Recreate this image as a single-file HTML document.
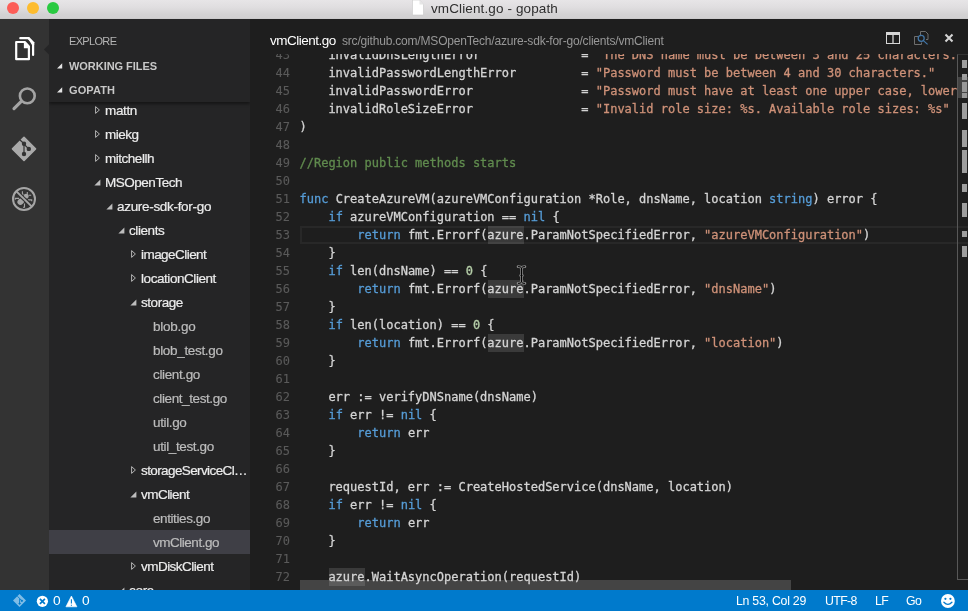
<!DOCTYPE html>
<html><head><meta charset="utf-8"><title>vmClient.go - gopath</title>
<style>
*{box-sizing:border-box;margin:0;padding:0}
html,body{width:968px;height:611px;overflow:hidden;background:#1e1e1e}
body{position:relative;font-family:"Liberation Sans",sans-serif;color:#ccc}
#titlebar{position:absolute;left:0;top:0;width:968px;height:19px;background:linear-gradient(#e7e5e7,#e0dee0 40%,#d3d2d3 80%,#d1d0d1);border-bottom:1px solid #cbcacb}
.dot{position:absolute;top:2px;width:12px;height:12px;border-radius:50%}
#title{will-change:transform;position:absolute;left:430.5px;top:0;height:18px;line-height:17px;font-size:13.5px;color:#2e2e2e;white-space:nowrap;letter-spacing:0.121px}
#ficon{position:absolute;left:412px;top:0}
#activity{position:absolute;left:0;top:19px;width:49px;height:571px;background:#333333}
#activity svg{position:absolute;left:0;top:0}
#sidebar{position:absolute;left:49px;top:19px;width:201px;height:571px;background:#252526;overflow:hidden}
#editor{position:absolute;left:250px;top:19px;width:718px;height:571px;background:#1e1e1e;overflow:hidden}
#status{position:absolute;left:0;top:590px;width:968px;height:21px;background:#007acc;color:#fff;font-size:12.3px}
#status span{will-change:transform;position:absolute;top:0;height:21px;line-height:22px;white-space:nowrap}
#status svg{position:absolute;left:0;top:0}
#shead{position:absolute;left:0;top:0;width:201px;height:83px;background:#252526;box-shadow:0 2px 3px rgba(0,0,0,.45);z-index:2}
.hdr{will-change:transform;position:absolute;left:20px;white-space:nowrap;font-size:11px;line-height:14px}
.row{position:absolute;left:0;width:201px;height:24px;line-height:24px;font-size:13.5px;white-space:nowrap}
.row span{position:absolute;top:1px;will-change:transform;-webkit-text-stroke:0.2px}
.row.d span{color:#ececec}
.row.f span{color:#bcbcbc}
.row.sel{background:#3f3f46}
.row svg{position:absolute;top:0}
#ehead{position:absolute;left:0;top:0;width:718px;height:35px;background:#1e1e1e;z-index:3}
#ehead span{position:absolute;white-space:nowrap;will-change:transform}
#code{position:absolute;left:0;top:0;width:707px;height:571px;overflow:hidden}
.ln{will-change:transform;position:absolute;left:0;width:1400px;height:18px;line-height:18px;font-family:"DejaVu Sans Mono","Liberation Mono",monospace;font-size:12px;white-space:pre;color:#d4d4d4;-webkit-text-stroke:0.3px}
.ln i{position:absolute;left:0;top:0;width:40px;text-align:right;color:#5a5a5a;font-style:normal;-webkit-text-stroke:0.1px}
.ln b{position:absolute;left:49.5px;top:0;font-weight:normal}
.k{color:#569cd6}.s{color:#ce9178}.m{color:#608b4e}.d{color:#b5cea8}
.h{position:absolute;width:36.2px;height:18px;background:rgba(255,255,255,.125)}
#cur{position:absolute;left:50px;width:657px;height:18px;border:2px solid #282828;border-right:0}
#ruler{position:absolute;left:707px;top:35px;width:11px;height:526px;border-left:1px solid #585858;border-bottom:1px solid #585858;border-top:1px solid #333;background:#1e1e1e;z-index:4}
#ruler div{position:absolute;left:4px;width:5px;margin-top:-1px;background:#9e9e9e}
#ruler s{position:absolute;left:0;width:10px;height:2px;background:#282828;z-index:-1}
#ruler p{position:absolute;left:0;top:22px;width:10px;height:21px;background:rgba(140,140,140,.35)}
#hscroll{position:absolute;left:50px;top:561px;width:491px;height:10px;background:#444}
</style></head><body>
<div id="titlebar"><div class="dot" style="left:7px;background:#fc5d57"></div><div class="dot" style="left:27px;background:#fdbc2f"></div><div class="dot" style="left:47px;background:#2aca41"></div><svg id="ficon" width="13" height="17" viewBox="0 0 13 17"><path d="M0.5 0 H7.5 L11.5 4.5 V15 H0.5 Z" fill="#fff" stroke="#c8c8c8" stroke-width="0.6"/><path d="M7.5 0 V4.5 H11.5 Z" fill="#e6e6e6"/></svg><div id="title">vmClient.go - gopath</div></div>
<div id="activity"><svg width="49" height="571" viewBox="0 19 49 571"><path d="M49 44.5 L44 49.5 L49 54.5 Z" fill="#252526"/><g fill="none" stroke="#fff" stroke-width="2.2" stroke-linejoin="round" stroke-linecap="round"><path d="M20.3 38.2 H28.4 L33.1 43 V55"/><path d="M16.2 42 H24.8 L28.9 46.4 V59.2 H16.2 Z"/></g><path d="M23.9 41.6 L29.8 48.3 H23.9 Z" fill="#fff"/><path d="M27.2 37.1 H29.2 L34.2 42.2 V45 H32 Z" fill="#fff"/><g fill="none" stroke="#a4a4a4" stroke-linecap="round"><circle cx="27.3" cy="95.9" r="7.4" stroke-width="2.6"/><path d="M21.3 101.4 L14 108.6" stroke-width="3.2"/></g><g><path d="M24 137.4 L35.5 148.9 L24 160.4 L12.5 148.9 Z" fill="#aaa" stroke="#aaa" stroke-width="1.6" stroke-linejoin="round"/><g stroke="#333" stroke-width="1.2" fill="#333"><path d="M19.8 139.8 L24 143.8 V154" fill="none"/><path d="M24 144.2 L28.5 148.6" fill="none"/><circle cx="24" cy="143.7" r="1.6"/><circle cx="28.8" cy="148.9" r="1.6"/><circle cx="24" cy="154" r="1.6"/></g></g><g fill="#a6a6a6"><ellipse cx="20.7" cy="201.6" rx="3.5" ry="3" transform="rotate(-45 20.7 201.6)"/><circle cx="26.1" cy="196.3" r="2.5"/></g><g fill="none" stroke="#a6a6a6" stroke-width="1.1"><path d="M15.2 199.8 V198.4 H19 M22.4 191.2 V194.2 H23.6 M27.3 192 V194.8 M28.6 195.3 H31.2 M28 199.9 H31.7 V201.2 M24.5 203.6 V207.3 H23"/></g><path d="M16.2 191.5 L31.6 206.3" stroke="#333" stroke-width="4" fill="none"/><g fill="none" stroke="#a6a6a6"><circle cx="24" cy="199" r="11" stroke-width="2"/><path d="M16.4 191.4 L31.6 206.4" stroke-width="2"/></g></svg></div>
<div id="sidebar">
<div id="shead"><div class="hdr" style="top:15px;color:#b4b4b4;letter-spacing:-0.667px">EXPLORE</div><div class="hdr" style="top:40px;color:#c8c8c8;font-weight:bold;letter-spacing:-0.047px">WORKING FILES</div><div class="hdr" style="top:64px;color:#c8c8c8;font-weight:bold;letter-spacing:0.127px">GOPATH</div><svg width="201" height="83" style="position:absolute;left:0;top:0"><path d="M13.2 44.2 V49.4 H8 Z M13.2 68.2 V73.4 H8 Z" fill="#e4e4e4"/></svg></div>
<div class="row d" style="top:79px"><svg width="8" height="24" style="left:45px"><path d="M1.6 8.6 L5.4 12 L1.6 15.4 Z" fill="none" stroke="#b4b4b4" stroke-width="1"/></svg><span style="left:56px;letter-spacing:-0.353px">mattn</span></div>
<div class="row d" style="top:103px"><svg width="8" height="24" style="left:45px"><path d="M1.6 8.6 L5.4 12 L1.6 15.4 Z" fill="none" stroke="#b4b4b4" stroke-width="1"/></svg><span style="left:56px;letter-spacing:-0.483px">miekg</span></div>
<div class="row d" style="top:127px"><svg width="8" height="24" style="left:45px"><path d="M1.6 8.6 L5.4 12 L1.6 15.4 Z" fill="none" stroke="#b4b4b4" stroke-width="1"/></svg><span style="left:56px;letter-spacing:-0.476px">mitchellh</span></div>
<div class="row d" style="top:151px"><svg width="8" height="24" style="left:45px"><path d="M6.4 9.4 V15.4 H0.4 Z" fill="#bdbdbd"/></svg><span style="left:56px;letter-spacing:-0.480px">MSOpenTech</span></div>
<div class="row d" style="top:175px"><svg width="8" height="24" style="left:57px"><path d="M6.4 9.4 V15.4 H0.4 Z" fill="#bdbdbd"/></svg><span style="left:68px;letter-spacing:-0.309px">azure-sdk-for-go</span></div>
<div class="row d" style="top:199px"><svg width="8" height="24" style="left:69px"><path d="M6.4 9.4 V15.4 H0.4 Z" fill="#bdbdbd"/></svg><span style="left:80px;letter-spacing:-0.424px">clients</span></div>
<div class="row d" style="top:223px"><svg width="8" height="24" style="left:81px"><path d="M1.6 8.6 L5.4 12 L1.6 15.4 Z" fill="none" stroke="#b4b4b4" stroke-width="1"/></svg><span style="left:92px;letter-spacing:-0.545px">imageClient</span></div>
<div class="row d" style="top:247px"><svg width="8" height="24" style="left:81px"><path d="M1.6 8.6 L5.4 12 L1.6 15.4 Z" fill="none" stroke="#b4b4b4" stroke-width="1"/></svg><span style="left:92px;letter-spacing:-0.439px">locationClient</span></div>
<div class="row d" style="top:271px"><svg width="8" height="24" style="left:81px"><path d="M6.4 9.4 V15.4 H0.4 Z" fill="#bdbdbd"/></svg><span style="left:92px;letter-spacing:-0.447px">storage</span></div>
<div class="row f" style="top:295px"><span style="left:104px;letter-spacing:-0.257px">blob.go</span></div>
<div class="row f" style="top:319px"><span style="left:104px;letter-spacing:-0.330px">blob_test.go</span></div>
<div class="row f" style="top:343px"><span style="left:104px;letter-spacing:-0.366px">client.go</span></div>
<div class="row f" style="top:367px"><span style="left:104px;letter-spacing:-0.404px">client_test.go</span></div>
<div class="row f" style="top:391px"><span style="left:104px;letter-spacing:-0.376px">util.go</span></div>
<div class="row f" style="top:415px"><span style="left:104px;letter-spacing:-0.375px">util_test.go</span></div>
<div class="row d" style="top:439px"><svg width="8" height="24" style="left:81px"><path d="M1.6 8.6 L5.4 12 L1.6 15.4 Z" fill="none" stroke="#b4b4b4" stroke-width="1"/></svg><span style="left:92px;letter-spacing:-0.606px">storageServiceCl…</span></div>
<div class="row d" style="top:463px"><svg width="8" height="24" style="left:81px"><path d="M6.4 9.4 V15.4 H0.4 Z" fill="#bdbdbd"/></svg><span style="left:92px;letter-spacing:-0.539px">vmClient</span></div>
<div class="row f" style="top:487px"><span style="left:104px;letter-spacing:-0.413px">entities.go</span></div>
<div class="row f sel" style="top:511px"><span style="left:104px;letter-spacing:-0.480px">vmClient.go</span></div>
<div class="row d" style="top:535px"><svg width="8" height="24" style="left:81px"><path d="M1.6 8.6 L5.4 12 L1.6 15.4 Z" fill="none" stroke="#b4b4b4" stroke-width="1"/></svg><span style="left:92px;letter-spacing:-0.530px">vmDiskClient</span></div>
<div class="row d" style="top:559px"><svg width="8" height="24" style="left:69px"><path d="M6.4 9.4 V15.4 H0.4 Z" fill="#bdbdbd"/></svg><span style="left:80px;letter-spacing:-0.316px">core</span></div>
</div>
<div id="editor">
<div id="ehead"><span style="left:20px;top:14px;font-size:13.5px;line-height:16px;color:#fff;letter-spacing:-0.498px">vmClient.go</span><span style="left:92px;top:14px;font-size:12px;line-height:16px;color:#989898;letter-spacing:-0.190px">src/github.com/MSOpenTech/azure-sdk-for-go/clients/vmClient</span><svg width="718" height="35" style="position:absolute;left:0;top:0"><g fill="none" stroke="#d6d6d6"><rect x="636.5" y="13.5" width="13" height="11" stroke-width="1"/><path d="M636 14.5 H650" stroke-width="3"/><path d="M643 14 V25" stroke-width="1.3"/></g><g fill="none" stroke="#6e6e6e" stroke-width="1"><path d="M668 17.5 H664.5 V25.5 H671.5 V23.5"/><path d="M670.5 16 V12.5 H675.5 L678 15 V20.5 H676"/></g><g fill="none" stroke="#4377a8" stroke-width="1.25"><circle cx="671.2" cy="19.3" r="3"/><path d="M673.4 21.6 L677.6 25.4"/></g><path d="M695.5 15.6 L702.5 22.6 M702.5 15.6 L695.5 22.6" stroke="#d4d4d4" stroke-width="2.1" fill="none"/></svg></div>
<div id="code">
<div id="cur" style="top:207px"></div>
<div id="hscroll"></div>
<div class="h" style="left:237.8px;top:207px"></div>
<div class="h" style="left:237.8px;top:261px"></div>
<div class="h" style="left:237.8px;top:315px"></div>
<div class="h" style="left:78.9px;top:549px"></div>
<div class="ln" style="top:27px"><i>43</i><b>    invalidDnsLengthError              = <span class="s">"The DNS name must be between 3 and 25 characters."</span></b></div>
<div class="ln" style="top:45px"><i>44</i><b>    invalidPasswordLengthError         = <span class="s">"Password must be between 4 and 30 characters."</span></b></div>
<div class="ln" style="top:63px"><i>45</i><b>    invalidPasswordError               = <span class="s">"Password must have at least one upper case, lower case and numeric character."</span></b></div>
<div class="ln" style="top:81px"><i>46</i><b>    invalidRoleSizeError               = <span class="s">"Invalid role size: %s. Available role sizes: %s"</span></b></div>
<div class="ln" style="top:99px"><i>47</i><b>)</b></div>
<div class="ln" style="top:117px"><i>48</i><b></b></div>
<div class="ln" style="top:135px"><i>49</i><b><span class="m">//Region public methods starts</span></b></div>
<div class="ln" style="top:153px"><i>50</i><b></b></div>
<div class="ln" style="top:171px"><i>51</i><b><span class="k">func</span> CreateAzureVM(azureVMConfiguration *Role, dnsName, location <span class="k">string</span>) error {</b></div>
<div class="ln" style="top:189px"><i>52</i><b>    <span class="k">if</span> azureVMConfiguration == <span class="k">nil</span> {</b></div>
<div class="ln" style="top:207px"><i>53</i><b>        <span class="k">return</span> fmt.Errorf(azure.ParamNotSpecifiedError, <span class="s">"azureVMConfiguration"</span>)</b></div>
<div class="ln" style="top:225px"><i>54</i><b>    }</b></div>
<div class="ln" style="top:243px"><i>55</i><b>    <span class="k">if</span> len(dnsName) == <span class="d">0</span> {</b></div>
<div class="ln" style="top:261px"><i>56</i><b>        <span class="k">return</span> fmt.Errorf(azure.ParamNotSpecifiedError, <span class="s">"dnsName"</span>)</b></div>
<div class="ln" style="top:279px"><i>57</i><b>    }</b></div>
<div class="ln" style="top:297px"><i>58</i><b>    <span class="k">if</span> len(location) == <span class="d">0</span> {</b></div>
<div class="ln" style="top:315px"><i>59</i><b>        <span class="k">return</span> fmt.Errorf(azure.ParamNotSpecifiedError, <span class="s">"location"</span>)</b></div>
<div class="ln" style="top:333px"><i>60</i><b>    }</b></div>
<div class="ln" style="top:351px"><i>61</i><b></b></div>
<div class="ln" style="top:369px"><i>62</i><b>    err := verifyDNSname(dnsName)</b></div>
<div class="ln" style="top:387px"><i>63</i><b>    <span class="k">if</span> err != <span class="k">nil</span> {</b></div>
<div class="ln" style="top:405px"><i>64</i><b>        <span class="k">return</span> err</b></div>
<div class="ln" style="top:423px"><i>65</i><b>    }</b></div>
<div class="ln" style="top:441px"><i>66</i><b></b></div>
<div class="ln" style="top:459px"><i>67</i><b>    requestId, err := CreateHostedService(dnsName, location)</b></div>
<div class="ln" style="top:477px"><i>68</i><b>    <span class="k">if</span> err != <span class="k">nil</span> {</b></div>
<div class="ln" style="top:495px"><i>69</i><b>        <span class="k">return</span> err</b></div>
<div class="ln" style="top:513px"><i>70</i><b>    }</b></div>
<div class="ln" style="top:531px"><i>71</i><b></b></div>
<div class="ln" style="top:549px"><i>72</i><b>    azure.WaitAsyncOperation(requestId)</b></div>
</div>
<div id="ruler"><div style="top:6px;height:8px"></div><div style="top:20px;height:6px"></div><div style="top:28px;height:10px"></div><div style="top:39px;height:5px"></div><div style="top:49px;height:16px"></div><div style="top:76px;height:17px"></div><div style="top:96px;height:23px"></div><div style="top:130px;height:8px"></div><div style="top:149px;height:14px"></div><div style="top:177px;height:6px"></div><div style="top:192px;height:11px"></div><p></p><s style="top:171px"></s><s style="top:187px"></s></div>
<svg width="13" height="22" viewBox="0 0 13 22" style="position:absolute;left:265px;top:245px;z-index:5"><path d="M3 2.6 Q5.6 2.4 6.5 4 Q7.4 2.4 10 2.6 M6.5 4 V18 M3 19.4 Q5.6 19.6 6.5 18 Q7.4 19.6 10 19.4 M5.5 11.5 H7.5" fill="none" stroke="#858585" stroke-width="2.6" stroke-linecap="round"/><path d="M3 2.6 Q5.6 2.4 6.5 4 Q7.4 2.4 10 2.6 M6.5 4 V18 M3 19.4 Q5.6 19.6 6.5 18 Q7.4 19.6 10 19.4 M5.5 11.5 H7.5" fill="none" stroke="#000" stroke-width="1" stroke-linecap="butt"/></svg>
</div>
<div id="status"><svg width="968" height="21" viewBox="0 590 968 21"><path d="M19.5 594 L26 600.5 L19.5 607 L13 600.5 Z" fill="#80bde6"/><g stroke="#007acc" stroke-width="0.9" fill="#007acc"><path d="M17.4 596.2 L19.6 598.4 V604 M19.6 598.6 L22 600.8" fill="none"/><circle cx="19.6" cy="603.6" r="0.7"/><circle cx="21.9" cy="600.8" r="0.7"/></g><circle cx="42.4" cy="601.3" r="5.6" fill="#fff"/><path d="M39.9 598.8 L44.9 603.8 M44.9 598.8 L39.9 603.8" stroke="#007acc" stroke-width="1.7" fill="none"/><path d="M71.4 596 L76.9 606.8 H65.9 Z" fill="#fff" stroke="#fff" stroke-width="0.6" stroke-linejoin="round"/><path d="M71.4 599.2 V603.6 M71.4 604.7 V605.8" stroke="#007acc" stroke-width="1.1" fill="none"/><circle cx="947.9" cy="601" r="6.9" fill="#fff"/><circle cx="945.4" cy="598.8" r="1.1" fill="#007acc"/><circle cx="950.4" cy="598.8" r="1.1" fill="#007acc"/><path d="M943.9 602.2 Q947.9 606.6 951.9 602.2" stroke="#007acc" stroke-width="1.3" fill="none" stroke-linecap="round"/></svg>
<span style="left:53.2px;transform:scaleX(1.12);transform-origin:0 0">0</span>
<span style="left:81.8px;transform:scaleX(1.12);transform-origin:0 0">0</span>
<span style="left:736.1px;letter-spacing:-0.243px">Ln 53, Col 29</span>
<span style="left:824.7px;letter-spacing:-0.609px">UTF-8</span>
<span style="left:874.6px;letter-spacing:-0.630px">LF</span>
<span style="left:905.8px;letter-spacing:-0.453px">Go</span>
</div>
</body></html>
